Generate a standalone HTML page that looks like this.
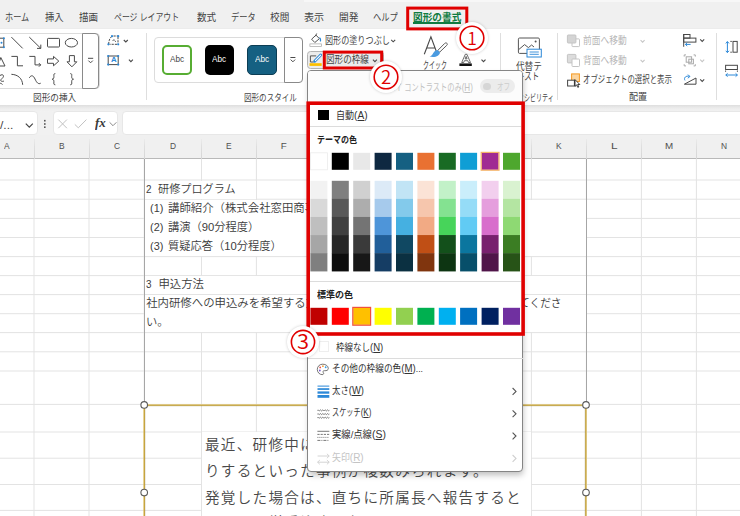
<!DOCTYPE html><html lang="ja"><head><meta charset="utf-8"><title>Excel</title><style>
html,body{margin:0;padding:0;background:#fff;}
#r{position:relative;width:740px;height:516px;overflow:hidden;background:#fff;font-family:"Liberation Sans","Noto Sans CJK JP",sans-serif;}
#r div,#r svg,#r span{position:absolute;box-sizing:border-box;}
#r i{font-style:normal;font-size:1.12em;}
#r span{white-space:pre;transform-origin:0 50%;line-height:20px;height:20px;}
</style></head><body><div id="r">
<div style="left:0px;top:0px;width:740px;height:28px;background:#f0f0f0;"></div>
<div style="left:0px;top:27.6px;width:740px;height:77.6px;background:#fff;border-top:1px solid #ececec;"></div>
<div style="left:0px;top:105px;width:740px;height:7px;background:linear-gradient(#dedede,#e6e6e6 25%,#eeeeee 55%,#f2f2f2);"></div>
<div style="left:0px;top:112px;width:740px;height:24px;background:#f1f1f1;"></div>
<div style="left:-6px;top:111.4px;width:43.8px;height:23.3px;background:#fff;border-radius:4px;border:1px solid #e7e7e7;"></div>
<div style="left:53.1px;top:111.4px;width:65.4px;height:23.3px;background:#fff;border-radius:4px;border:1px solid #e7e7e7;"></div>
<div style="left:121.5px;top:111.4px;width:640px;height:23.3px;background:#fff;border-radius:4px;border:1px solid #e7e7e7;"></div>
<div style="left:304px;top:0px;width:436px;height:1.6px;background:#f7f7f7;"></div>
<div style="left:0px;top:135px;width:740px;height:23.5px;background:#f0f0f0;border-bottom:1px solid #b9b9b9;"></div>
<div style="left:33.5px;top:139px;width:1px;height:19.5px;background:linear-gradient(rgba(216,216,216,0.2),#dedede 40%,#d6d6d6);"></div>
<div style="left:88.5px;top:139px;width:1px;height:19.5px;background:linear-gradient(rgba(216,216,216,0.2),#dedede 40%,#d6d6d6);"></div>
<div style="left:143.7px;top:139px;width:1px;height:19.5px;background:linear-gradient(rgba(216,216,216,0.2),#dedede 40%,#d6d6d6);"></div>
<div style="left:201.0px;top:139px;width:1px;height:19.5px;background:linear-gradient(rgba(216,216,216,0.2),#dedede 40%,#d6d6d6);"></div>
<div style="left:255.89999999999998px;top:139px;width:1px;height:19.5px;background:linear-gradient(rgba(216,216,216,0.2),#dedede 40%,#d6d6d6);"></div>
<div style="left:310.9px;top:139px;width:1px;height:19.5px;background:linear-gradient(rgba(216,216,216,0.2),#dedede 40%,#d6d6d6);"></div>
<div style="left:365.9px;top:139px;width:1px;height:19.5px;background:linear-gradient(rgba(216,216,216,0.2),#dedede 40%,#d6d6d6);"></div>
<div style="left:420.9px;top:139px;width:1px;height:19.5px;background:linear-gradient(rgba(216,216,216,0.2),#dedede 40%,#d6d6d6);"></div>
<div style="left:475.9px;top:139px;width:1px;height:19.5px;background:linear-gradient(rgba(216,216,216,0.2),#dedede 40%,#d6d6d6);"></div>
<div style="left:530.9px;top:139px;width:1px;height:19.5px;background:linear-gradient(rgba(216,216,216,0.2),#dedede 40%,#d6d6d6);"></div>
<div style="left:585.9px;top:139px;width:1px;height:19.5px;background:linear-gradient(rgba(216,216,216,0.2),#dedede 40%,#d6d6d6);"></div>
<div style="left:640.9px;top:139px;width:1px;height:19.5px;background:linear-gradient(rgba(216,216,216,0.2),#dedede 40%,#d6d6d6);"></div>
<div style="left:695.9px;top:139px;width:1px;height:19.5px;background:linear-gradient(rgba(216,216,216,0.2),#dedede 40%,#d6d6d6);"></div>
<svg style="left:0px;top:0px;" width="740" height="516" viewBox="0 0 740 516"><rect x="0" y="179.5" width="740" height="1" fill="#e3e3e3"/><rect x="0" y="198.7" width="740" height="1" fill="#e3e3e3"/><rect x="0" y="217.9" width="740" height="1" fill="#e3e3e3"/><rect x="0" y="237.0" width="740" height="1" fill="#e3e3e3"/><rect x="0" y="256.1" width="740" height="1" fill="#e3e3e3"/><rect x="0" y="275.1" width="740" height="1" fill="#e3e3e3"/><rect x="0" y="294.1" width="740" height="1" fill="#e3e3e3"/><rect x="0" y="313.2" width="740" height="1" fill="#e3e3e3"/><rect x="0" y="332.1" width="740" height="1" fill="#e3e3e3"/><rect x="0" y="351.3" width="740" height="1" fill="#e3e3e3"/><rect x="0" y="370.5" width="740" height="1" fill="#e3e3e3"/><rect x="0" y="403.9" width="740" height="1" fill="#e3e3e3"/><rect x="0" y="431.5" width="740" height="1" fill="#e3e3e3"/><rect x="0" y="457.7" width="740" height="1" fill="#e3e3e3"/><rect x="0" y="484.0" width="740" height="1" fill="#e3e3e3"/><rect x="0" y="509.9" width="740" height="1" fill="#e3e3e3"/><rect x="33.5" y="159" width="1" height="357" fill="#e3e3e3"/><rect x="88.5" y="159" width="1" height="357" fill="#e3e3e3"/><rect x="143.7" y="159" width="1" height="357" fill="#e3e3e3"/><rect x="201.0" y="159" width="1" height="357" fill="#e3e3e3"/><rect x="255.89999999999998" y="159" width="1" height="357" fill="#e3e3e3"/><rect x="310.9" y="159" width="1" height="357" fill="#e3e3e3"/><rect x="365.9" y="159" width="1" height="357" fill="#e3e3e3"/><rect x="420.9" y="159" width="1" height="357" fill="#e3e3e3"/><rect x="475.9" y="159" width="1" height="357" fill="#e3e3e3"/><rect x="530.9" y="159" width="1" height="357" fill="#e3e3e3"/><rect x="585.9" y="159" width="1" height="357" fill="#e3e3e3"/><rect x="640.9" y="159" width="1" height="357" fill="#e3e3e3"/><rect x="695.9" y="159" width="1" height="357" fill="#e3e3e3"/></svg>
<div style="left:144.8px;top:199.8px;width:441px;height:56.3px;background:#fff;"></div>
<div style="left:144.8px;top:180.6px;width:111px;height:18px;background:#fff;"></div>
<div style="left:144.8px;top:276.2px;width:441px;height:56px;background:#fff;"></div>
<div style="left:144.8px;top:294.1px;width:441px;height:1px;background:#e3e3e3;"></div>
<div style="left:143.7px;top:159px;width:1.1px;height:246px;background:#a6a6a6;"></div>
<div style="left:585.8px;top:159px;width:1.1px;height:246px;background:#a6a6a6;"></div>
<div style="left:202px;top:432px;width:329px;height:90px;background:#fff;"></div>
<span id="t0" style="left:4.5px;top:8.3px;font-size:10px;color:#444;transform:scaleX(0.817);">ホーム</span>
<span id="t1" style="left:44.8px;top:8.3px;font-size:10px;color:#444;transform:scaleX(0.935);">挿入</span>
<span id="t2" style="left:78.8px;top:8.3px;font-size:10px;color:#444;transform:scaleX(0.945);">描画</span>
<span id="t3" style="left:114.3px;top:8.3px;font-size:10px;color:#444;transform:scaleX(0.789);">ページ レイアウト</span>
<span id="t4" style="left:196.8px;top:8.3px;font-size:10px;color:#444;transform:scaleX(0.960);">数式</span>
<span id="t5" style="left:230.8px;top:8.3px;font-size:10px;color:#444;transform:scaleX(0.820);">データ</span>
<span id="t6" style="left:269.7px;top:8.3px;font-size:10px;color:#444;transform:scaleX(0.965);">校閲</span>
<span id="t7" style="left:303.9px;top:8.3px;font-size:10px;color:#444;transform:scaleX(1.005);">表示</span>
<span id="t8" style="left:338.6px;top:8.3px;font-size:10px;color:#444;transform:scaleX(0.970);">開発</span>
<span id="t9" style="left:373px;top:8.3px;font-size:10px;color:#444;transform:scaleX(0.827);">ヘルプ</span>
<span id="t10" style="left:413px;top:8.1px;font-size:10px;color:#107c41;font-weight:700;transform:scaleX(0.966);">図形の書式</span>
<div style="left:413px;top:22.4px;width:48.3px;height:1.8px;background:#107c41;"></div>
<div style="left:-5px;top:33px;width:105px;height:56px;border:1px solid #dcdcdc;border-radius:4px;background:#fff;"></div>
<div style="left:82.3px;top:32.8px;width:17.2px;height:56.4px;border:1px solid #8a8a8a;border-radius:0 4px 4px 0;background:#fff;"></div>
<svg style="left:0px;top:0px;" width="140" height="105" viewBox="0 0 140 105"><g fill="none" stroke="#4a4a4a" stroke-width="1">
<path d="M11.4 37.1 L22.7 48.4"/>
<path d="M29.3 37.1 L40.8 48.4 M40.8 44.6 V48.4 H37"/>
<rect x="47.5" y="38.4" width="12" height="8.6" rx="0.8"/>
<ellipse cx="71.4" cy="42.7" rx="6.1" ry="4.3"/>
<path d="M11.4 56.4 H17.4 V65.8 H23"/>
<path d="M29.3 56.4 H35 V64.9 H40.7 M38.9 63.1 L40.7 64.9 L38.9 66.7"/>
<path d="M47.5 58.9 H53.5 V56.4 L58.8 61.1 L53.5 65.8 V63.3 H47.5 Z"/>
<path d="M69.4 55.6 H74.4 V61.8 H76.8 L71.9 66.8 L67 61.8 H69.4 Z"/>
<path d="M-2 66 L0.8 57.5 L5 66 Z"/>
<path d="M11.4 74.3 C18 74.6 22.3 78.5 22.7 84.8"/>
<path d="M29.3 77.8 C31.3 74.6 33.4 75.4 35 79 C36.6 82.6 38.4 84.6 40.7 83.2"/>
<path d="M55.3 73.6 C53.4 73.6 53.9 75 53.9 76.6 C53.9 78.4 53.4 79.1 52.1 79.2 C53.4 79.3 53.9 80 53.9 81.8 C53.9 83.4 53.4 84.8 55.3 84.8"/>
<path d="M70.3 73.6 C72.2 73.6 71.7 75 71.7 76.6 C71.7 78.4 72.2 79.1 73.5 79.2 C72.2 79.3 71.7 80 71.7 81.8 C71.7 83.4 72.2 84.8 70.3 84.8"/>
<path d="M0 75.5 C3 73.5 5 76 2 78.5 C-1 81 2 82 4 81 M2.5 84.5 C1 83 0 83 -1 84"/>
<rect x="-4" y="38.2" width="7.8" height="9" />
</g>
<g fill="#2b88d8"><circle cx="3.9" cy="38.2" r="1"/><circle cx="3.9" cy="47.2" r="1"/><circle cx="1.5" cy="42.7" r="1"/></g>
<g fill="none" stroke="#4a4a4a" stroke-width="1"><path d="M88 58.3 H93.2 M88.4 60.6 L90.6 62.8 L92.8 60.6"/></g>
</svg>
<svg style="left:100px;top:30px;" width="45" height="45" viewBox="100 30 45 45"><g fill="none" stroke="#4a4a4a" stroke-width="1"><path d="M108.6 44.2 C108.8 40.5 110 37.5 112 36.3 M113.5 36 H118 M112.6 40.5 C114 39.5 115.6 40 115.5 41.8 M118 37 V43.6 M117 44.3 H109.5" stroke-dasharray="2.2 1"/>
<rect x="108.2" y="56" width="10" height="8.6"/>
<path d="M123.8 40 L125.8 42 L127.8 40 M128.9 59.6 L130.9 61.6 L132.9 59.6" stroke-width="1.1"/></g>
<g fill="#2b88d8"><circle cx="108.4" cy="44.3" r="1.1"/><circle cx="118.2" cy="44.3" r="1.1"/><circle cx="112" cy="36.2" r="1.1"/><circle cx="118.2" cy="36.2" r="1.1"/>
<circle cx="108.2" cy="56" r="1.1"/><circle cx="118.2" cy="56" r="1.1"/><circle cx="108.2" cy="64.6" r="1.1"/><circle cx="118.2" cy="64.6" r="1.1"/></g>
</svg>
<span id="t11" style="left:110.6px;top:50.4px;font-size:7.5px;color:#2b88d8;font-weight:700;transform:scaleX(1.040);">A</span>
<span id="t12" style="left:32.5px;top:88px;font-size:9.6px;color:#444;transform:scaleX(0.900);">図形の挿入</span>
<div style="left:146.3px;top:33px;width:1px;height:67px;background:#dedede;"></div>
<div style="left:499.8px;top:33px;width:1px;height:67px;background:#dedede;"></div>
<div style="left:557.0px;top:33px;width:1px;height:67px;background:#dedede;"></div>
<div style="left:716.0px;top:33px;width:1px;height:67px;background:#dedede;"></div>
<div style="left:154px;top:37.3px;width:148.5px;height:45.8px;border:1px solid #dcdcdc;border-radius:4px;background:#fff;"></div>
<div style="left:284px;top:37.1px;width:18.6px;height:46.2px;border:1px solid #8a8a8a;border-radius:0 4px 4px 0;background:#fff;"></div>
<div style="left:162.2px;top:45.3px;width:29.4px;height:29.6px;border:2px solid #57ad33;border-radius:5px;background:#fff;"></div>
<div style="left:204.5px;top:45.3px;width:29.8px;height:29.6px;border-radius:5px;background:#000;"></div>
<div style="left:247.3px;top:45.3px;width:30px;height:29.6px;border:1.3px solid #0c3d54;border-radius:5px;background:#156082;"></div>
<span id="t13" style="left:169.9px;top:49px;font-size:8.4px;color:#444;transform:scaleX(0.979);">Abc</span>
<span id="t14" style="left:212.4px;top:49px;font-size:8.4px;color:#fff;transform:scaleX(0.979);">Abc</span>
<span id="t15" style="left:255.3px;top:49px;font-size:8.4px;color:#fff;transform:scaleX(0.979);">Abc</span>
<svg style="left:284px;top:50px;" width="19" height="20" viewBox="0 0 19 20"><g fill="none" stroke="#4a4a4a" stroke-width="1"><path d="M6.4 7.5 H11.4 M6.7 9.6 L8.9 11.8 L11.1 9.6"/></g></svg>
<span id="t16" style="left:244px;top:88px;font-size:9.6px;color:#444;transform:scaleX(0.787);">図形のスタイル</span>
<div style="left:306.6px;top:51.3px;width:77.4px;height:18px;background:#ececec;border:1px solid #b4b4b4;border-radius:3.5px;"></div>
<svg style="left:300px;top:30px;" width="100" height="40" viewBox="300 30 100 40"><g fill="none" stroke="#555" stroke-width="1" stroke-linejoin="round">
<path d="M311.6 39.2 L316 35.1 L319.4 38.7 L314.8 42.5 Z M316.7 33.5 L315.3 36.2"/>
<rect x="309.9" y="43.9" width="11.5" height="2.5" fill="#fff" stroke="#a6a6a6" stroke-width="0.7" stroke-linejoin="miter"/>
<path d="M316.2 55.9 H310.4 V62 H313.6" stroke="#555"/>
</g>
<path d="M319 36.8 C320.8 37.3 321.6 39.4 321 41.5 C320.2 41.8 319.7 41.1 319.8 40.2 C320 39 319.8 37.9 319 36.8 Z" fill="#2b88d8"/>
<path d="M320.7 55.1 L314.9 61.1" fill="none" stroke="#2b88d8" stroke-width="2.9" stroke-linecap="round"/>
<path d="M320.7 55.1 L315.3 60.7" fill="none" stroke="#fff" stroke-width="1.1" stroke-linecap="round"/>
<path d="M313.4 62.6 L313.9 60.3 L315.7 62 Z" fill="#2b88d8"/>
<rect x="309.5" y="63.2" width="12.2" height="2.7" fill="#fdc000"/>
<g fill="none" stroke="#4a4a4a" stroke-width="1.1"><path d="M391.2 39.8 L393.2 41.8 L395.2 39.8 M372.9 59.6 L374.9 61.6 L376.9 59.6"/></g>
</svg>
<span id="t17" style="left:325.1px;top:30.6px;font-size:9.8px;color:#444;transform:scaleX(0.826);">図形の塗りつぶし</span>
<span id="t18" style="left:326px;top:50.4px;font-size:9.8px;color:#444;transform:scaleX(0.876);">図形の枠線</span>
<svg style="left:420px;top:30px;" width="80" height="40" viewBox="420 30 80 40"><g fill="none" stroke="#484848" stroke-width="1.1"><path d="M424.3 54.2 L430.9 36.9 L437.4 54.2 M426.7 48 H435"/></g>
<path d="M446.9 43.3 C447.6 43.9 447.4 44.7 446.7 45.4 L439.6 52.2 L437.8 50.4 L444.6 43.5 C445.3 42.8 446.2 42.7 446.9 43.3 Z" fill="#fff" stroke="#484848" stroke-width="0.9"/>
<path d="M437.6 50 L440 52.4 C439.6 55.6 435.4 58 429.6 56.6 C433.4 55.4 433 50.6 437.6 50 Z" fill="#4a9be0"/>
<g fill="#fff" stroke="#484848" stroke-width="0.8" stroke-linejoin="round"><path d="M461.7 62.5 L465.3 54.3 H466.9 L470.5 62.5 H468.5 L467.8 60.7 H464.4 L463.7 62.5 Z"/><path d="M465.1 58.9 L466.1 56.4 L467.1 58.9 Z"/></g>
<g fill="none" stroke="#484848"><path d="M481.5 59.6 L483.5 61.6 L485.5 59.6" stroke-width="1.1"/></g>
<rect x="459.4" y="63.4" width="12.4" height="2.6" fill="#111"/>
</svg>
<span id="t19" style="left:422.5px;top:56.4px;font-size:9.8px;color:#444;transform:scaleX(0.610);">クイック</span>
<svg style="left:510px;top:30px;" width="45" height="30" viewBox="510 30 45 30"><g fill="none" stroke="#555" stroke-width="1"><rect x="518.4" y="38" width="21" height="15.4" rx="1.2"/>
<path d="M518.8 49.5 L524.6 44.6 L528.4 47.6 L531.6 45 L534 47"/></g><circle cx="535.6" cy="41.6" r="1" fill="#555"/>
<rect x="527" y="49.2" width="14.3" height="7.8" fill="#fff" stroke="#2b88d8" stroke-width="1"/>
<path d="M529.6 52 H538.8 M529.6 54.3 H538.8" stroke="#2b88d8" stroke-width="0.9"/></svg>
<span id="t20" style="left:516px;top:56.7px;font-size:9.8px;color:#444;transform:scaleX(0.879);">代替テ</span>
<span id="t21" style="left:517.3px;top:67.3px;font-size:9.8px;color:#444;transform:scaleX(0.759);">キスト</span>
<span id="t22" style="left:506.4px;top:87.8px;font-size:9.6px;color:#444;transform:scaleX(0.632);">アクセシビリティ</span>
<svg style="left:560px;top:30px;" width="180" height="60" viewBox="560 30 180 60"><rect x="572" y="38.9" width="7.5" height="7.7" rx="0.8" fill="#fff" stroke="#c4c4c4"/>
<rect x="567.4" y="35" width="8.5" height="8" rx="0.8" fill="#d4d4d4" stroke="#c4c4c4"/>
<rect x="567.4" y="54.4" width="8.5" height="8.5" rx="0.8" fill="#dcdcdc" stroke="#c4c4c4"/>
<rect x="572" y="59" width="7.5" height="7.5" rx="0.8" fill="#fff" stroke="#c4c4c4"/>
<g fill="none" stroke="#c6c6c6" stroke-width="1.1"><path d="M640.6 40.2 L642.6 42.2 L644.6 40.2 M640.6 59.9 L642.6 61.9 L644.6 59.9 M700.2 59.6 L702.2 61.6 L704.2 59.6"/></g>
<rect x="571.6" y="73.9" width="7.8" height="7.6" fill="#fbd5a0" stroke="#f59a23" stroke-width="1"/>
<rect x="567.6" y="80.2" width="6.8" height="5.8" fill="#fff" stroke="#444" stroke-width="1"/>
<path d="M575 79.6 V86.4 L576.6 84.9 L577.8 87.4 L578.8 86.9 L577.7 84.5 H579.8 Z" fill="#fff" stroke="#111" stroke-width="0.8"/>
<g fill="none" stroke="#4a4a4a" stroke-width="1.1"><path d="M700.2 39.4 L702.2 41.4 L704.2 39.4 M700.2 79.4 L702.2 81.4 L704.2 79.4"/></g>
<g fill="none" stroke="#484848" stroke-width="1"><path d="M683.7 34 V46.8"/><rect x="683.7" y="34.5" width="6.3" height="3.6"/><rect x="683.7" y="38.1" width="12.2" height="4"/>
<path d="M684.4 84.2 H696 V78 Z"/></g>
<g fill="none" stroke="#2b88d8" stroke-width="1"><path d="M685.4 44.4 H690.6 M687.2 42.8 L685.4 44.4 L687.2 46"/>
<path d="M685 80.4 C683.4 77.8 686 75.3 689.6 76.4 M688 74.6 L689.9 76.5 L687.8 78.2"/>
<path d="M727.4 41.6 V52.6 M725.8 43.4 L727.4 41.6 L729 43.4 M725.8 50.8 L727.4 52.6 L729 50.8"/>
<path d="M725.8 75 H737.4 M727.6 73.4 L725.8 75 L727.6 76.6 M735.6 73.4 L737.4 75 L735.6 76.6"/></g>
<g fill="none" stroke="#a9a9a9" stroke-width="1"><rect x="686.2" y="56.8" width="5.4" height="5.4"/><rect x="688.8" y="59.2" width="4.6" height="4.6"/>
<path d="M684.2 56.6 V54.9 H686 M693.6 54.9 H695.3 V56.6 M695.3 64.2 V65.9 H693.6 M686 65.9 H684.2 V64.2"/></g>
<g fill="none" stroke="#484848" stroke-width="1"><rect x="733" y="41.4" width="4.2" height="10.8"/><path d="M730.2 41.4 H732 M730.2 52.2 H732" stroke-width="0.8"/>
<rect x="725.6" y="65.3" width="11.8" height="4.2"/><path d="M725.6 70.4 V72 M737.4 70.4 V72" stroke-width="0.8"/></g>
</svg>
<span id="t23" style="left:582.9px;top:30.7px;font-size:9.8px;color:#b6b6b6;transform:scaleX(0.890);">前面へ移動</span>
<span id="t24" style="left:582.9px;top:50.6px;font-size:9.8px;color:#b6b6b6;transform:scaleX(0.890);">背面へ移動</span>
<span id="t25" style="left:582.9px;top:70.4px;font-size:9.8px;color:#444;transform:scaleX(0.756);">オブジェクトの選択と表示</span>
<span id="t26" style="left:628.6px;top:87.2px;font-size:9.6px;color:#444;transform:scaleX(0.942);">配置</span>
<span id="t27" style="left:0.3px;top:115.2px;font-size:11px;color:#444;transform:scaleX(1.092);">/...</span>
<svg style="left:0px;top:112px;" width="120" height="24" viewBox="0 112 120 24"><g fill="none" stroke="#444" stroke-width="1.2"><path d="M25.8 123.6 L29.3 127.1 L32.8 123.6"/></g>
<g fill="#555"><rect x="44" y="119.9" width="1.6" height="1.6"/><rect x="44" y="123.2" width="1.6" height="1.6"/><rect x="44" y="126.4" width="1.6" height="1.6"/></g>
<g fill="none" stroke="#c2c2c2" stroke-width="1"><path d="M58.3 119.6 L66.9 128.2 M66.9 119.6 L58.3 128.2 M74.8 124.4 L78.3 127.8 L86.4 119.6"/></g>
<g fill="none" stroke="#8a8a8a" stroke-width="1"><path d="M109.6 122.3 L113 125.7 L116.4 122.3"/></g></svg>
<span id="t28" style="left:94.8px;top:113.4px;font-size:12.5px;color:#3a3a3a;font-weight:700;font-family:'Liberation Serif',serif;transform:scaleX(1.040);font-style:italic;">fx</span>
<span id="t29" style="left:4px;top:136.4px;font-size:9.8px;color:#505050;transform:scaleX(0.857);">A</span>
<span id="t30" style="left:58.5px;top:136.4px;font-size:9.8px;color:#505050;transform:scaleX(0.857);">B</span>
<span id="t31" style="left:113.6px;top:136.4px;font-size:9.8px;color:#505050;transform:scaleX(0.857);">C</span>
<span id="t32" style="left:170px;top:136.4px;font-size:9.8px;color:#505050;transform:scaleX(0.857);">D</span>
<span id="t33" style="left:225.8px;top:136.4px;font-size:9.8px;color:#505050;transform:scaleX(0.857);">E</span>
<span id="t34" style="left:280.8px;top:136.4px;font-size:9.8px;color:#505050;">F</span>
<span id="t35" style="left:556px;top:136.4px;font-size:9.8px;color:#505050;transform:scaleX(0.857);">K</span>
<span id="t36" style="left:611px;top:136.4px;font-size:9.8px;color:#505050;transform:scaleX(1.200);">L</span>
<span id="t37" style="left:665px;top:136.4px;font-size:9.8px;color:#505050;">M</span>
<span id="t38" style="left:720.6px;top:136.4px;font-size:9.8px;color:#505050;transform:scaleX(0.857);">N</span>
<span id="t39" style="left:146.4px;top:178.9px;font-size:11.4px;color:#3c3c3c;font-weight:350;transform:scaleX(0.867);">2</span>
<span id="t40" style="left:158.4px;top:178.9px;font-size:11.4px;color:#3c3c3c;font-weight:350;transform:scaleX(0.977);">研修プログラム</span>
<span id="t41" style="left:149.6px;top:197.9px;font-size:11.4px;color:#3c3c3c;font-weight:350;transform:scaleX(0.957);">(1)</span>
<span id="t42" style="left:168px;top:197.9px;font-size:11.4px;color:#3c3c3c;font-weight:350;">講師紹介（株式会社窓田商事</span>
<span id="t43" style="left:149.6px;top:216.9px;font-size:11.4px;color:#3c3c3c;font-weight:350;transform:scaleX(0.957);">(2)</span>
<span id="t44" style="left:168px;top:216.9px;font-size:11.4px;color:#3c3c3c;font-weight:350;transform:scaleX(0.988);">講演（90分程度）</span>
<span id="t45" style="left:149.6px;top:235.9px;font-size:11.4px;color:#3c3c3c;font-weight:350;transform:scaleX(0.957);">(3)</span>
<span id="t46" style="left:168px;top:235.9px;font-size:11.4px;color:#3c3c3c;font-weight:350;transform:scaleX(0.988);">質疑応答（10分程度）</span>
<span id="t47" style="left:146.4px;top:273.6px;font-size:11.4px;color:#3c3c3c;font-weight:350;transform:scaleX(0.867);">3</span>
<span id="t48" style="left:158.4px;top:273.6px;font-size:11.4px;color:#3c3c3c;font-weight:350;">申込方法</span>
<span id="t49" style="left:146.2px;top:292.6px;font-size:11.4px;color:#3c3c3c;font-weight:350;">社内研修への申込みを希望する方は</span>
<span id="t50" style="left:519.2px;top:292.6px;font-size:11.4px;color:#3c3c3c;font-weight:350;transform:scaleX(0.942);">てくださ</span>
<span id="t51" style="left:146.2px;top:311.8px;font-size:11.4px;color:#3c3c3c;font-weight:350;transform:scaleX(0.991);">い。</span>
<span id="t52" style="left:205px;top:434.6px;font-size:14.6px;color:#484848;font-weight:350;letter-spacing:1.25px;">最近、研修中に居眠りをしたり、内職をした</span>
<span id="t53" style="left:205px;top:461px;font-size:14.6px;color:#484848;font-weight:350;letter-spacing:1.25px;">りするといった事例が複数みられます。</span>
<span id="t54" style="left:205px;top:487.6px;font-size:14.6px;color:#484848;font-weight:350;letter-spacing:1.25px;">発覚した場合は、直ちに所属長へ報告すると</span>
<span id="t55" style="left:205px;top:513.4px;font-size:14.6px;color:#484848;font-weight:350;letter-spacing:1.25px;transform:scaleX(1.009);">ともに、厳重注意を行います。</span>
<svg style="left:0px;top:0px;" width="740" height="516" viewBox="0 0 740 516"><path d="M144.2 516 V405.1 H585.9 V516" fill="none" stroke="#d6a926" stroke-width="1.3"/>
<path d="M144.9 516 V405.8 H585.2 V516" fill="none" stroke="#7d7440" stroke-width="0.5" opacity="0.7"/>
<g fill="#fff" stroke="#5a5a5a" stroke-width="1.1"><circle cx="144.2" cy="404.9" r="3.3"/><circle cx="586" cy="404.9" r="3.3"/><circle cx="144.2" cy="492.6" r="3.3"/><circle cx="586" cy="492.6" r="3.3"/><circle cx="365" cy="404.9" r="3.3"/></g></svg>
<div style="left:306.9px;top:69.5px;width:216.6px;height:402px;background:#fff;border:1px solid #858585;border-radius:4px;box-shadow:1px 4px 6px -1px rgba(0,0,0,.26);"></div>
<div style="left:307.9px;top:70.5px;width:214.6px;height:32px;background:#fcfcfc;border-radius:3px 3px 0 0;"></div>
<span id="t56" style="left:388px;top:76.6px;font-size:9.8px;color:#c2c2c2;transform:scaleX(0.734);">ハイ コントラストのみ<i>(<u>H</u>)</i></span>
<div style="left:479.5px;top:79.1px;width:35px;height:14.4px;background:#ececec;border-radius:8px;"></div>
<div style="left:483px;top:82.5px;width:7.8px;height:7.8px;background:#d6d6d6;border-radius:50%;"></div>
<span id="t57" style="left:496.5px;top:76.6px;font-size:9.4px;color:#cdcdcd;transform:scaleX(0.705);">オフ</span>
<div style="left:318px;top:109.8px;width:10.8px;height:10.2px;background:#000;"></div>
<span id="t58" style="left:335.8px;top:105.4px;font-size:9.8px;color:#333;transform:scaleX(0.924);">自動<i>(<u>A</u>)</i></span>
<div style="left:310px;top:126px;width:211px;height:1px;background:#dcdcdc;"></div>
<span id="t59" style="left:317.1px;top:130.2px;font-size:9.6px;color:#222;font-weight:700;transform:scaleX(0.835);">テーマの色</span>
<svg style="left:300px;top:150px;" width="230" height="180" viewBox="300 150 230 180"><rect x="310.4" y="152.8" width="17" height="17" stroke="#ececec" stroke-width="0.8" fill="#FFFFFF"/><rect x="310.4" y="180.80" width="17" height="18.3" fill="#F2F2F2"/><rect x="310.4" y="198.88" width="17" height="18.3" fill="#D9D9D9"/><rect x="310.4" y="216.96" width="17" height="18.3" fill="#BFBFBF"/><rect x="310.4" y="235.04" width="17" height="18.3" fill="#A6A6A6"/><rect x="310.4" y="253.12" width="17" height="18.3" fill="#7F7F7F"/><rect x="331.8" y="152.8" width="17" height="17" fill="#000000"/><rect x="331.8" y="180.80" width="17" height="18.3" fill="#7F7F7F"/><rect x="331.8" y="198.88" width="17" height="18.3" fill="#595959"/><rect x="331.8" y="216.96" width="17" height="18.3" fill="#404040"/><rect x="331.8" y="235.04" width="17" height="18.3" fill="#262626"/><rect x="331.8" y="253.12" width="17" height="18.3" fill="#0D0D0D"/><rect x="353.2" y="152.8" width="17" height="17" fill="#E8E8E8"/><rect x="353.2" y="180.80" width="17" height="18.3" fill="#D0D0D0"/><rect x="353.2" y="198.88" width="17" height="18.3" fill="#ADADAD"/><rect x="353.2" y="216.96" width="17" height="18.3" fill="#747474"/><rect x="353.2" y="235.04" width="17" height="18.3" fill="#3A3A3A"/><rect x="353.2" y="253.12" width="17" height="18.3" fill="#171717"/><rect x="374.6" y="152.8" width="17" height="17" fill="#0E2841"/><rect x="374.6" y="180.80" width="17" height="18.3" fill="#DCEAF7"/><rect x="374.6" y="198.88" width="17" height="18.3" fill="#A6CAEC"/><rect x="374.6" y="216.96" width="17" height="18.3" fill="#4E95D9"/><rect x="374.6" y="235.04" width="17" height="18.3" fill="#215F9A"/><rect x="374.6" y="253.12" width="17" height="18.3" fill="#153D64"/><rect x="396.0" y="152.8" width="17" height="17" fill="#156082"/><rect x="396.0" y="180.80" width="17" height="18.3" fill="#C1E4F5"/><rect x="396.0" y="198.88" width="17" height="18.3" fill="#83CAEB"/><rect x="396.0" y="216.96" width="17" height="18.3" fill="#45B0E1"/><rect x="396.0" y="235.04" width="17" height="18.3" fill="#104862"/><rect x="396.0" y="253.12" width="17" height="18.3" fill="#0B3041"/><rect x="417.4" y="152.8" width="17" height="17" fill="#E97132"/><rect x="417.4" y="180.80" width="17" height="18.3" fill="#FBE3D6"/><rect x="417.4" y="198.88" width="17" height="18.3" fill="#F6C6AD"/><rect x="417.4" y="216.96" width="17" height="18.3" fill="#F2AA84"/><rect x="417.4" y="235.04" width="17" height="18.3" fill="#C04F15"/><rect x="417.4" y="253.12" width="17" height="18.3" fill="#80350E"/><rect x="438.8" y="152.8" width="17" height="17" fill="#196B24"/><rect x="438.8" y="180.80" width="17" height="18.3" fill="#C2F1C8"/><rect x="438.8" y="198.88" width="17" height="18.3" fill="#84E291"/><rect x="438.8" y="216.96" width="17" height="18.3" fill="#47D45A"/><rect x="438.8" y="235.04" width="17" height="18.3" fill="#13501B"/><rect x="438.8" y="253.12" width="17" height="18.3" fill="#0D3512"/><rect x="460.1" y="152.8" width="17" height="17" fill="#0F9ED5"/><rect x="460.1" y="180.80" width="17" height="18.3" fill="#CAEEFB"/><rect x="460.1" y="198.88" width="17" height="18.3" fill="#95DCF7"/><rect x="460.1" y="216.96" width="17" height="18.3" fill="#61CBF4"/><rect x="460.1" y="235.04" width="17" height="18.3" fill="#0B769F"/><rect x="460.1" y="253.12" width="17" height="18.3" fill="#074F6A"/><rect x="481.6" y="152.8" width="17" height="17" fill="#A02B93"/><rect x="481.6" y="180.80" width="17" height="18.3" fill="#F2CFEE"/><rect x="481.6" y="198.88" width="17" height="18.3" fill="#E59EDD"/><rect x="481.6" y="216.96" width="17" height="18.3" fill="#D86ECC"/><rect x="481.6" y="235.04" width="17" height="18.3" fill="#78206E"/><rect x="481.6" y="253.12" width="17" height="18.3" fill="#501549"/><rect x="503.0" y="152.8" width="17" height="17" fill="#4EA72E"/><rect x="503.0" y="180.80" width="17" height="18.3" fill="#D9F2D0"/><rect x="503.0" y="198.88" width="17" height="18.3" fill="#B4E5A2"/><rect x="503.0" y="216.96" width="17" height="18.3" fill="#8ED973"/><rect x="503.0" y="235.04" width="17" height="18.3" fill="#3B7D23"/><rect x="503.0" y="253.12" width="17" height="18.3" fill="#275317"/><rect x="310.4" y="307.8" width="17" height="17" fill="#C00000"/><rect x="331.8" y="307.8" width="17" height="17" fill="#FF0000"/><rect x="353.2" y="307.8" width="17" height="17" fill="#FFC000"/><rect x="374.6" y="307.8" width="17" height="17" fill="#FFFF00"/><rect x="396.0" y="307.8" width="17" height="17" fill="#92D050"/><rect x="417.4" y="307.8" width="17" height="17" fill="#00B050"/><rect x="438.8" y="307.8" width="17" height="17" fill="#00B0F0"/><rect x="460.1" y="307.8" width="17" height="17" fill="#0070C0"/><rect x="481.6" y="307.8" width="17" height="17" fill="#002060"/><rect x="503.0" y="307.8" width="17" height="17" fill="#7030A0"/><rect x="481.2" y="152.4" width="17.8" height="17.8" fill="none" stroke="#f4b266" stroke-width="1.2"/><rect x="352.8" y="307.4" width="17.8" height="17.8" fill="none" stroke="#f0503c" stroke-width="1.2"/></svg>
<div style="left:310px;top:281px;width:211px;height:1px;background:#dcdcdc;"></div>
<span id="t60" style="left:317.1px;top:284.9px;font-size:9.6px;color:#222;font-weight:700;transform:scaleX(0.939);">標準の色</span>
<div style="left:318.9px;top:341.2px;width:10.6px;height:11.2px;background:#fff;border:1px solid #eeeeee;"></div>
<span id="t61" style="left:335.8px;top:337.4px;font-size:9.8px;color:#333;transform:scaleX(0.869);">枠線なし<i>(<u>N</u>)</i></span>
<div style="left:308px;top:357.6px;width:214.5px;height:1px;background:#dcdcdc;"></div>
<svg style="left:310px;top:360px;" width="215" height="110" viewBox="310 360 215 110"><g transform="translate(322.8 369.4) scale(0.9) translate(-323.1 -370.4)"><path d="M323 364.6 C319.4 364.6 317 367.2 317 370.4 C317 373.8 319.6 376.2 322.4 376.2 C324.2 376.2 324.4 374.8 323.6 373.9 C322.8 372.9 323.6 371.6 325 371.8 C327.4 372.2 329.2 371.2 329.2 369.4 C329.2 366.6 326.4 364.6 323 364.6 Z" fill="#fff" stroke="#555" stroke-width="0.9"/>
<circle cx="320.2" cy="368.2" r="1" fill="#e8504c"/><circle cx="323.2" cy="366.8" r="1" fill="#f2a33a"/><circle cx="326.3" cy="368" r="1" fill="#3aa0e8"/><circle cx="319.8" cy="371.6" r="1" fill="#7a5bd0"/></g>
<g fill="#2b88d8"><rect x="317.5" y="385.6" width="11.8" height="1"/><rect x="317.5" y="388.2" width="11.8" height="1.7"/><rect x="317.5" y="391.4" width="11.8" height="2.3"/><rect x="317.5" y="395" width="11.8" height="2.8"/></g>
<g fill="none" stroke="#555" stroke-width="0.8"><path d="M317.4 410.4 q0.6 -1 1.2 0 t1.2 0 t1.2 0 t1.2 0 t1.2 0 t1.2 0 t1.2 0 t1.2 0 t1.2 0 t1.2 0 M317.4 414.1 q0.6 -1 1.2 0 t1.2 0 t1.2 0 t1.2 0 t1.2 0 t1.2 0 t1.2 0 t1.2 0 t1.2 0 t1.2 0 M317.4 417.7 q0.6 -1 1.2 0 t1.2 0 t1.2 0 t1.2 0 t1.2 0 t1.2 0 t1.2 0 t1.2 0 t1.2 0 t1.2 0"/>
<path d="M317.4 431.3 H329.4"/><path d="M317.4 434.4 H329.4" stroke-dasharray="2.2 1"/><path d="M317.4 437.4 H329.4" stroke-dasharray="1 1"/><path d="M317.4 440.4 H329.4" stroke-dasharray="3 1 1 1"/></g>
<g fill="none" stroke="#cfcfcf" stroke-width="0.9"><path d="M317.6 456 H329.2 M326.9 453.8 L329.2 456 L326.9 458.2 M329.2 462.2 H317.6 M319.9 460 L317.6 462.2 L319.9 464.4 M326.9 460 L329.2 462.2 L326.9 464.4"/></g>
<g fill="none" stroke="#555" stroke-width="1.1"><path d="M512.6 388 L516 391.4 L512.6 394.8 M512.6 410.4 L516 413.8 L512.6 417.2 M512.6 432.6 L516 436 L512.6 439.4"/></g>
<g fill="none" stroke="#cfcfcf" stroke-width="1.1"><path d="M512.6 455 L516 458.4 L512.6 461.8"/></g>
</svg>
<span id="t62" style="left:332.1px;top:358.2px;font-size:9.8px;color:#333;transform:scaleX(0.883);">その他の枠線の色<i>(<u>M</u>)</i>...</span>
<span id="t63" style="left:332.1px;top:379.8px;font-size:9.8px;color:#333;transform:scaleX(0.859);">太さ<i>(<u>W</u>)</i></span>
<span id="t64" style="left:332.1px;top:402.3px;font-size:9.8px;color:#333;transform:scaleX(0.731);">スケッチ<i>(<u>K</u>)</i></span>
<span id="t65" style="left:332.1px;top:424.3px;font-size:9.8px;color:#333;transform:scaleX(0.953);">実線/点線<i>(<u>S</u>)</i></span>
<span id="t66" style="left:332.1px;top:446.8px;font-size:9.8px;color:#c4c4c4;transform:scaleX(0.909);">矢印<i>(<u>R</u>)</i></span>
<svg style="left:0px;top:0px;pointer-events:none;" width="740" height="516" viewBox="0 0 740 516"><rect x="407.70" y="8.10" width="59.10" height="20.80" fill="none" stroke="#e00000" stroke-width="3"/></svg>
<svg style="left:0px;top:0px;pointer-events:none;" width="740" height="516" viewBox="0 0 740 516"><rect x="324.30" y="52.10" width="57.40" height="15.90" fill="none" stroke="#e00000" stroke-width="3"/></svg>
<svg style="left:0px;top:0px;pointer-events:none;" width="740" height="516" viewBox="0 0 740 516"><rect x="308.20" y="103.20" width="214.90" height="230.80" fill="none" stroke="#e00000" stroke-width="3.6"/></svg>
<div style="left:456.2px;top:21.9px;width:32px;height:32px;background:#fff;border-radius:50%;box-shadow:0 0 3px rgba(0,0,0,.2);"></div>
<svg style="left:456.2px;top:21.9px;" width="32" height="32" viewBox="0 0 32 32"><circle cx="16" cy="16" r="11.799999999999999" fill="none" stroke="#e00000" stroke-width="1.6"/></svg>
<span id="t67" style="left:467.1980625px;top:27.7px;font-size:17.5px;color:#e00000;font-weight:350;font-family:'Noto Sans CJK JP',sans-serif;">1</span>
<div style="left:370.1px;top:60.900000000000006px;width:32px;height:32px;background:#fff;border-radius:50%;box-shadow:0 0 3px rgba(0,0,0,.2);"></div>
<svg style="left:370.1px;top:60.900000000000006px;" width="32" height="32" viewBox="0 0 32 32"><circle cx="16" cy="16" r="11.799999999999999" fill="none" stroke="#e00000" stroke-width="1.6"/></svg>
<span id="t68" style="left:380.95515px;top:65.5px;font-size:18px;color:#e00000;font-weight:350;font-family:'Noto Sans CJK JP',sans-serif;transform:scaleX(1.029);">2</span>
<div style="left:286.6px;top:325.9px;width:32px;height:32px;background:#fff;border-radius:50%;box-shadow:0 0 3px rgba(0,0,0,.2);"></div>
<svg style="left:286.6px;top:325.9px;" width="32" height="32" viewBox="0 0 32 32"><circle cx="16" cy="16" r="11.6" fill="none" stroke="#e00000" stroke-width="1.6"/></svg>
<span id="t69" style="left:296.7405875px;top:330.3px;font-size:20.5px;color:#e00000;font-weight:350;font-family:'Noto Sans CJK JP',sans-serif;transform:scaleX(1.065);">3</span>
</div></body></html>
